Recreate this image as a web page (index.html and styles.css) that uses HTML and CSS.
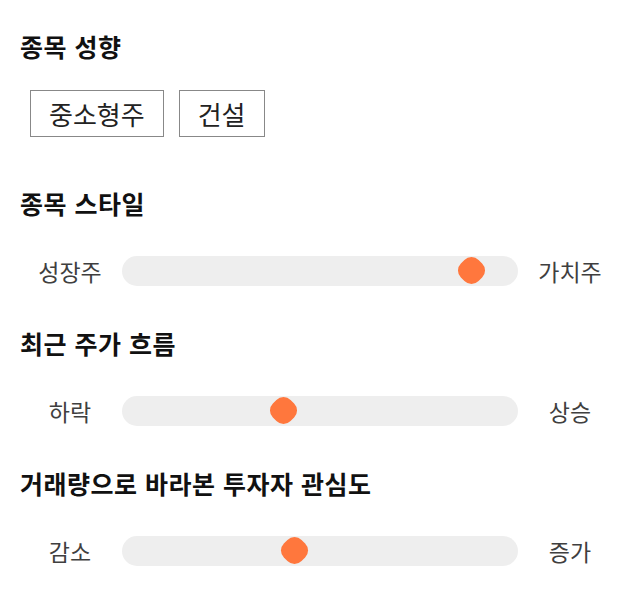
FILE: index.html
```html
<!DOCTYPE html>
<html lang="ko">
<head>
<meta charset="utf-8">
<link rel="stylesheet" href="styles.css">
</head>
<body>
<main class="page">
  <section class="sec sec-tags">
    <h2 class="title">종목 성향</h2>
    <div class="tags">
      <span class="tag">중소형주</span>
      <span class="tag">건설</span>
    </div>
  </section>
  <section class="sec">
    <h2 class="title">종목 스타일</h2>
    <div class="row">
      <span class="lbl">성장주</span>
      <div class="track"><span class="thumb" style="left: 349px"></span></div>
      <span class="lbl">가치주</span>
    </div>
  </section>
  <section class="sec">
    <h2 class="title">최근 주가 흐름</h2>
    <div class="row">
      <span class="lbl">하락</span>
      <div class="track"><span class="thumb" style="left: 161px"></span></div>
      <span class="lbl">상승</span>
    </div>
  </section>
  <section class="sec">
    <h2 class="title">거래량으로 바라본 투자자 관심도</h2>
    <div class="row">
      <span class="lbl">감소</span>
      <div class="track"><span class="thumb" style="left: 172px"></span></div>
      <span class="lbl">증가</span>
    </div>
  </section>
</main>
</body>
</html>
```
FILE: styles.css
```css
* { box-sizing: border-box; }
html, body { margin: 0; padding: 0; background: #fff; }
body {
  font-family: "Noto Sans CJK KR", "Noto Sans", sans-serif;
  color: #111;
}
.page {
  display: flex;
  flex-direction: column;
  padding: 31px 20px 0 20px;
}
.sec { display: flex; flex-direction: column; }
.title {
  margin: 0;
  font-size: 25px;
  line-height: 30px;
  font-weight: 700;
  letter-spacing: 0.5px;
  color: #111;
}
.tags {
  display: flex;
  gap: 15px;
  margin: 29px 0 51px 10px;
}
.tag {
  border: 1px solid #888;
  height: 47px;
  padding: 0 18px;
  font-size: 26px;
  line-height: 45px;
  color: #222;
}
.row {
  display: flex;
  align-items: center;
  margin: 38px 0 42px 0;
  height: 30px;
}
.lbl {
  width: 100px;
  text-align: center;
  font-size: 23px;
  color: #3f3f3f;
}
.track {
  position: relative;
  flex: 1;
  height: 30px;
  margin: 0 2px;
  background: #eeeeee;
  border-radius: 15px;
}
.thumb {
  position: absolute;
  top: 2px;
  width: 25px;
  height: 25px;
  margin-left: -12.5px;
  background: #ff773d;
  border-radius: 10px;
  transform: rotate(45deg);
}
```
